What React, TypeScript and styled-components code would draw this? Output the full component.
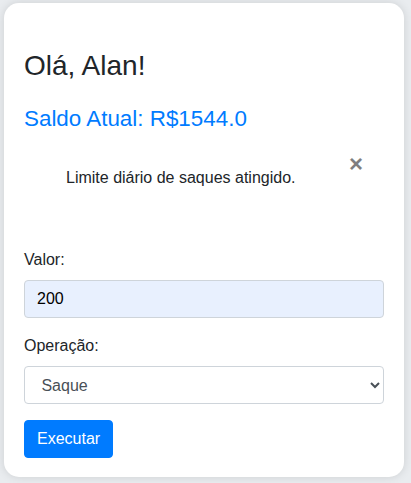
import React from "react";
import styled, { createGlobalStyle } from "styled-components";

const Global = createGlobalStyle`
  html, body { margin: 0; padding: 0; }
  body {
    background: #e9ecef;
    font-family: "Liberation Sans", Arial, sans-serif;
    font-size: 16px;
    line-height: 1.5;
    color: #212529;
  }
  * { box-sizing: border-box; }
`;

const Page = styled.div`
  padding: 3px 7px 6px 4px;
`;

const Card = styled.div`
  width: 400px;
  background: #fff;
  border-radius: 15px;
  box-shadow: 0 0 10px rgba(0, 0, 0, 0.12);
  padding: 20px 20px 19px;
`;

const Title = styled.h1`
  margin: 26px 0 23px;
  font-size: 28px;
  font-weight: 400;
  line-height: 1.2;
  color: #212529;
`;

const Balance = styled.h2`
  margin: 0;
  font-size: 22.4px;
  font-weight: 400;
  line-height: 1.2;
  color: #007bff;
`;

const Alert = styled.div`
  position: relative;
  margin: 22px 0 46px;
  padding: 12px 64px 12px 42px;
  color: #212529;
`;

const Close = styled.button`
  position: absolute;
  top: -2px;
  right: 21px;
  padding: 0;
  border: 0;
  background: transparent;
  font-family: "Liberation Sans", Arial, sans-serif;
  font-size: 24px;
  font-weight: 700;
  line-height: 1;
  color: #000;
  opacity: 0.5;
  cursor: pointer;
`;

const Field = styled.div`
  margin-bottom: 16px;
`;

const Label = styled.label`
  display: block;
  margin-bottom: 8px;
`;

const Input = styled.input`
  display: block;
  width: 100%;
  height: 38px;
  padding: 6px 12px;
  font-family: inherit;
  font-size: 16px;
  line-height: 1.5;
  color: #000;
  background: #e8f0fe;
  border: 1px solid #ced4da;
  border-radius: 4px;
  outline: none;
`;

const Select = styled.select`
  display: block;
  width: 100%;
  height: 38px;
  padding: 6px 8px;
  font-family: inherit;
  font-size: 16px;
  line-height: 1.5;
  color: #495057;
  background: #fff;
  border: 1px solid #ced4da;
  border-radius: 4px;
  outline: none;
`;

const Button = styled.button`
  display: inline-block;
  height: 38px;
  padding: 6px 12px;
  font-family: inherit;
  font-size: 16px;
  line-height: 1.5;
  color: #fff;
  background: #007bff;
  border: 1px solid #007bff;
  border-radius: 4px;
  cursor: pointer;
`;

export default function App() {
  return (
    <>
      <Global />
      <Page>
        <Card>
          <Title>Olá, Alan!</Title>
          <Balance>Saldo Atual: R$1544.0</Balance>
          <Alert>
            Limite diário de saques atingido.
            <Close type="button" aria-label="Fechar">×</Close>
          </Alert>
          <Field>
            <Label htmlFor="valor">Valor:</Label>
            <Input id="valor" defaultValue="200" />
          </Field>
          <Field>
            <Label htmlFor="op">Operação:</Label>
            <Select id="op" defaultValue="saque">
              <option value="saque">&nbsp;Saque</option>
              <option value="deposito">Depósito</option>
            </Select>
          </Field>
          <Button type="button">Executar</Button>
        </Card>
      </Page>
    </>
  );
}
